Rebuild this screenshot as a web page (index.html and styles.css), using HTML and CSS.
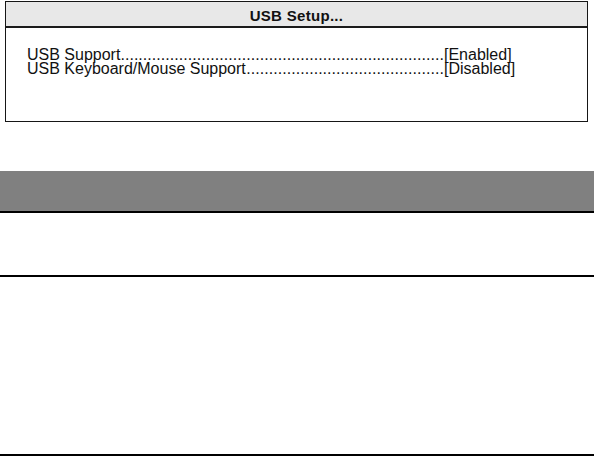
FILE: index.html
```html
<!DOCTYPE html>
<html>
<head>
<meta charset="utf-8">
<link rel="stylesheet" href="styles.css">
</head>
<body>
<div class="setup">
  <div class="setup-title">USB Setup...</div>
  <div class="setup-body">
    <div class="row">
      <span class="label">USB Support</span>
      <span class="dots">........................................................................</span>
      <span class="value">[Enabled]</span>
    </div>
    <div class="row">
      <span class="label">USB Keyboard/Mouse Support</span>
      <span class="dots">............................................</span>
      <span class="value">[Disabled]</span>
    </div>
  </div>
</div>
<div class="table">
  <div class="table-head"></div>
  <div class="table-row short"></div>
  <div class="table-row tall"></div>
</div>
</body>
</html>
```
FILE: styles.css
```css
html, body {
  margin: 0;
  padding: 0;
  background: #fff;
}
body {
  width: 594px;
  height: 456px;
  overflow: hidden;
  font-family: "Liberation Sans", Arial, sans-serif;
  color: #111;
}
.setup {
  margin: 1px 0 0 5px;
  width: 581px;
  border: 1px solid #161616;
  box-sizing: content-box;
}
.setup-title {
  height: 26px;
  background: #e8e8e8;
  border-bottom: 2px solid #1a1a1a;
  display: flex;
  align-items: center;
  justify-content: center;
  font-weight: bold;
  font-size: 15px;
  letter-spacing: 0.3px;
  padding-top: 3px;
  box-sizing: border-box;
}
.setup-body {
  height: 93px;
  padding: 20px 0 0 21px;
  box-sizing: border-box;
  font-size: 16px;
  line-height: 14px;
}
.row {
  display: flex;
  width: 497px;
  white-space: nowrap;
}
.label {
  flex: none;
}
.dots {
  flex: 1;
  min-width: 0;
  letter-spacing: 0.05px;
  text-align: right;
}
.value {
  flex: none;
  width: 80px;
}
.table {
  margin-top: 49px;
}
.table-head {
  height: 40px;
  background: #808080;
  border-bottom: 2px solid #000;
}
.table-row {
  border-bottom: 2px solid #000;
}
.table-row.short {
  height: 62px;
}
.table-row.tall {
  height: 177px;
}
```
